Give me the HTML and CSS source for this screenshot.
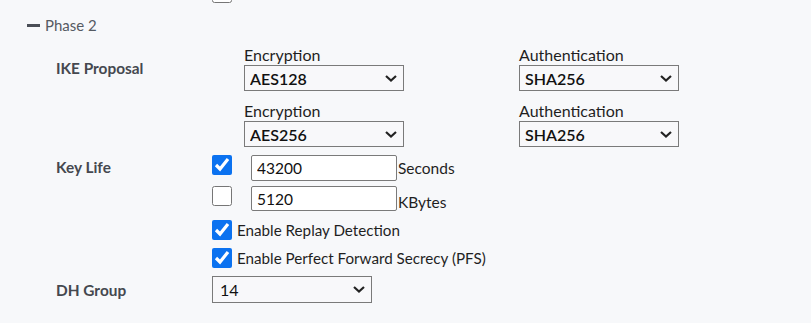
FILE: index.html
```html
<!DOCTYPE html>
<html lang="en">
<head>
    <meta charset="UTF-8">
    <title>Phase 2</title>
    <link rel="stylesheet" href="styles.css">
</head>
<body>
    <div class="top-check">
        <label class="check-line"><input type="checkbox" class="box"> Enable Local LAN</label>
    </div>

    <div class="section-head">
        <span class="dash"></span>
        <span>Phase 2</span>
    </div>

    <div class="form-row ike">
        <div class="row-label ike-label">IKE Proposal</div>
        <div class="proposal-grid">
            <div class="field">
                <div class="field-label">Encryption</div>
                <select class="select"><option>AES128</option></select>
            </div>
            <div class="field">
                <div class="field-label">Authentication</div>
                <select class="select"><option>SHA256</option></select>
            </div>
            <div class="field">
                <div class="field-label">Encryption</div>
                <select class="select"><option>AES256</option></select>
            </div>
            <div class="field">
                <div class="field-label">Authentication</div>
                <select class="select"><option>SHA256</option></select>
            </div>
        </div>
    </div>

    <div class="form-row keylife">
        <div class="row-label keylife-label">Key Life</div>
        <div class="keylife-fields">
            <div class="life-line">
                <input type="checkbox" class="box" checked>
                <input type="text" class="text-input" value="43200">
                <span class="unit">Seconds</span>
            </div>
            <div class="life-line">
                <input type="checkbox" class="box">
                <input type="text" class="text-input short" value="5120">
                <span class="unit">KBytes</span>
            </div>
        </div>
    </div>

    <div class="form-row option">
        <div class="row-label"></div>
        <label class="check-line"><input type="checkbox" class="box" checked> Enable Replay Detection</label>
    </div>

    <div class="form-row option">
        <div class="row-label"></div>
        <label class="check-line"><input type="checkbox" class="box" checked> Enable Perfect Forward Secrecy (PFS)</label>
    </div>

    <div class="form-row dh">
        <div class="row-label">DH Group</div>
        <select class="select dh-select"><option>14</option></select>
    </div>
</body>
</html>
```

FILE: styles.css
```css
body {
    margin: 0;
    background: #f7f8fa;
    font-family: 'Lato', 'Open Sans', sans-serif;
    font-size: 15px;
    line-height: 18px;
    color: #1f1f1f;
    overflow: hidden;
}

.box {
    width: 20px;
    height: 20px;
    margin: 0;
    accent-color: #0b72f0;
    flex-shrink: 0;
}

.check-line {
    display: flex;
    align-items: center;
    gap: 5px;
    font-size: 15.2px;
}

.top-check {
    margin-top: -17px;
    padding-left: 212px;
}

.section-head {
    display: flex;
    align-items: center;
    gap: 5px;
    margin-top: 13px;
    padding-left: 27px;
    color: #555a62;
}

.dash {
    width: 13px;
    height: 3px;
    background: #4a4e56;
}

.form-row {
    display: flex;
}

.row-label {
    width: 156px;
    padding-left: 56px;
    flex-shrink: 0;
    font-size: 15.4px;
    font-weight: bold;
    color: #45484f;
}

/* IKE proposal */
.ike {
    margin-top: 12px;
}

.ike-label {
    padding-top: 13px;
}

.proposal-grid {
    display: grid;
    grid-template-columns: 275px 160px;
    row-gap: 11px;
    padding-left: 32px;
}

.field-label {
    margin-bottom: 1px;
    font-size: 16px;
}

.select {
    display: block;
    width: 160px;
    height: 26px;
    margin: 0;
    padding: 0 20px 0 5px;
    border: 1px solid #7a7a7a;
    border-radius: 0;
    background: #f8f8fa url("data:image/svg+xml,%3Csvg xmlns='http://www.w3.org/2000/svg' width='12' height='7' viewBox='0 0 12 7'%3E%3Cpath d='M1 1l5 4.5L11 1' fill='none' stroke='%23222' stroke-width='2.2'/%3E%3C/svg%3E") no-repeat right 6px center;
    font-family: inherit;
    font-size: 16px;
    font-weight: 600;
    color: #111;
    appearance: none;
    box-sizing: border-box;
}

/* key life */
.keylife {
    margin-top: 8px;
}

.keylife-label {
    padding-top: 3px;
}

.keylife-fields {
    display: flex;
    flex-direction: column;
    gap: 5px;
}

.life-line {
    display: flex;
    align-items: flex-start;
}

.text-input {
    width: 146px;
    height: 26px;
    margin: 0 0 0 19px;
    padding: 0 5px;
    border: 1px solid #7a7a7a;
    border-radius: 2px;
    background: #fff;
    font-family: inherit;
    font-size: 15.5px;
    color: #111;
    box-sizing: border-box;
}

.text-input.short {
    height: 25px;
}

.unit {
    margin-top: 4px;
    padding-left: 1px;
    font-size: 15.5px;
}

.life-line + .life-line .unit {
    margin-top: 7px;
}

.option {
    margin-top: 9px;
}

.option + .option {
    margin-top: 8px;
}

.dh {
    margin-top: 8px;
    align-items: center;
}

.dh-select {
    height: 27px;
    padding-left: 7px;
    font-weight: normal;
}
```
